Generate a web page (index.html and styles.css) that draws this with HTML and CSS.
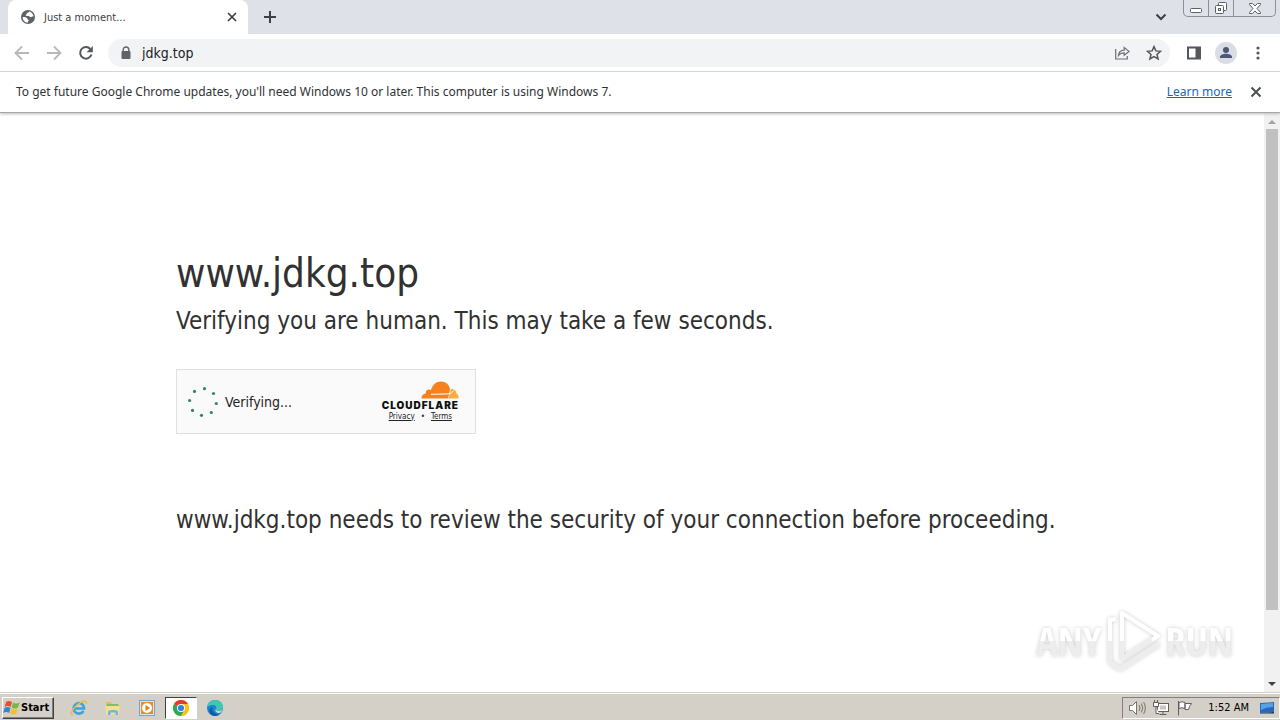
FILE: index.html
```html
<!DOCTYPE html>
<html lang="en">
<head>
    <meta charset="UTF-8">
    <meta name="viewport" content="width=device-width, initial-scale=1.0">
    <title>Just a moment...</title>
    <link rel="stylesheet" href="styles.css">
</head>
<body>
    <!-- Tab strip -->
    <header class="tab-strip">
        <div class="tab">
            <svg class="favicon" width="16" height="16" viewBox="0 0 16 16">
                <circle cx="8" cy="8" r="7" fill="#5f6368"/>
                <path d="M2.6 8.2c1.5-.3 3.4-.2 4.4.7.8.7.2 1.5 1.3 1.8.8.2.5 1.2-.3 1.6v1.3C4.900 13.400 2.600 11.200 2.600 8.200zM9 2.600c-.3 1-.9 1.300-1.700 1.500-.8.2-.3 1.200-1.200 1.500-.7.200-.4 1.200.4 1.300h2.200c1 0 1 1.300 1.800 1.300 1.300 0 1.200-1 3-1C13.200 4.900 11.500 3.100 9 2.600z" fill="#fff"/>
            </svg>
            <span class="tab-title">Just a moment...</span>
            <button class="icon-btn tab-close" aria-label="Close tab">
                <svg width="10" height="10" viewBox="0 0 10 10"><path d="M1 1l8 8M9 1L1 9" stroke="#3c4043" stroke-width="1.7"/></svg>
            </button>
        </div>
        <button class="icon-btn new-tab" aria-label="New tab">
            <svg width="12" height="12" viewBox="0 0 12 12"><path d="M6 0v12M0 6h12" stroke="#3c4043" stroke-width="2"/></svg>
        </button>
        <button class="icon-btn tab-search" aria-label="Search tabs">
            <svg width="12" height="8" viewBox="0 0 12 8"><path d="M1.500 1.500L6 6l4.500-4.500" fill="none" stroke="#3c4043" stroke-width="2"/></svg>
        </button>
        <div class="window-controls">
            <button aria-label="Minimize">
                <svg width="14" height="14" viewBox="0 0 14 14"><rect x="1.500" y="7.500" width="11" height="4" rx="1" fill="#fff" stroke="#5b5f66"/></svg>
            </button>
            <button aria-label="Restore">
                <svg width="14" height="14" viewBox="0 0 14 14" fill="#fff" stroke="#5b5f66"><rect x="4.500" y="1.500" width="8" height="8" rx="1"/><rect x="1.500" y="4.500" width="8" height="8" rx="1"/><rect x="4.500" y="7.500" width="2" height="2"/></svg>
            </button>
            <button class="close" aria-label="Close">
                <svg width="14" height="14" viewBox="0 0 14 14"><path d="M1.500 2.500h3L7 5l2.500-2.500h3v1L9 7.500l3.500 4v1h-3L7 10l-2.500 2.500h-3v-1L5 7.500l-3.500-4z" fill="#fff" stroke="#5b5f66"/></svg>
            </button>
        </div>
    </header>

    <!-- Toolbar -->
    <nav class="toolbar">
        <button class="icon-btn" aria-label="Back" disabled>
            <svg width="16" height="16" viewBox="0 0 16 16"><path d="M15 8H2M8 1.500L1.500 8 8 14.500" fill="none" stroke="#b6b8bb" stroke-width="1.800"/></svg>
        </button>
        <button class="icon-btn" aria-label="Forward" disabled>
            <svg width="16" height="16" viewBox="0 0 16 16"><path d="M1 8h13M8 1.500L14.500 8 8 14.500" fill="none" stroke="#b6b8bb" stroke-width="1.800"/></svg>
        </button>
        <button class="icon-btn" aria-label="Reload">
            <svg width="16" height="16" viewBox="0 0 16 16"><path d="M13.500 9.500A5.800 5.800 0 1 1 12.300 4" fill="none" stroke="#54575c" stroke-width="2"/><path d="M14.800 1v6.200H8.600z" fill="#54575c"/></svg>
        </button>
        <div class="omnibox">
            <svg width="12" height="14" viewBox="0 0 12 14"><path d="M3.200 6V3.800a2.800 2.800 0 0 1 5.600 0V6" fill="none" stroke="#5f6368" stroke-width="1.400"/><rect x="1.500" y="5" width="9" height="8" rx="1" fill="#5f6368"/></svg>
            <input type="text" value="jdkg.top" aria-label="Address">
            <button class="icon-btn" aria-label="Share">
                <svg width="16" height="16" viewBox="0 0 16 16" fill="none" stroke="#6c7075" stroke-width="1.200"><path d="M1.700 4v10h11.600v-3"/><path d="M4.500 10.500c.3-3.600 2-5.200 5.700-5.300V2.500L15 6.400l-4.800 3.800V7.800c-2.500 0-4.300.7-5.700 2.700z"/></svg>
            </button>
            <button class="icon-btn" aria-label="Bookmark">
                <svg width="16" height="16" viewBox="0 0 16 16"><path d="M8 1.600l1.900 4.300 4.600.4-3.500 3.100 1.100 4.600L8 11.600 3.900 14 5 9.400 1.500 6.300l4.600-.4z" fill="none" stroke="#54575c" stroke-width="1.500"/></svg>
            </button>
        </div>
        <button class="icon-btn" aria-label="Side panel">
            <svg width="16" height="16" viewBox="0 0 16 16"><rect x="2" y="2.500" width="12" height="11" fill="none" stroke="#54575c" stroke-width="2"/><path d="M9.500 2h5v12h-5z" fill="#54575c"/></svg>
        </button>
        <button class="icon-btn avatar" aria-label="Profile">
            <svg width="22" height="22" viewBox="0 0 22 22"><circle cx="11" cy="11" r="11" fill="#dadde3"/><circle cx="11" cy="8" r="3" fill="#4b5877"/><path d="M5 16v-1c0-2.200 3.500-3.300 6-3.300s6 1.100 6 3.300v1z" fill="#4b5877"/></svg>
        </button>
        <button class="icon-btn" aria-label="Menu">
            <svg width="16" height="16" viewBox="0 0 16 16" fill="#54575c"><circle cx="8" cy="3" r="1.600"/><circle cx="8" cy="8" r="1.600"/><circle cx="8" cy="13" r="1.600"/></svg>
        </button>
    </nav>

    <div class="infobar">
        <span class="infobar-text">To get future Google Chrome updates, you'll need Windows 10 or later. This computer is using Windows 7.</span>
        <a href="#">Learn more</a>
        <button class="icon-btn" aria-label="Dismiss">
            <svg width="12" height="12" viewBox="0 0 12 12"><path d="M1.500 1.500l9 9M10.500 1.500l-9 9" stroke="#4b4e52" stroke-width="1.900"/></svg>
        </button>
    </div>

    <!-- Page -->
    <div class="viewport">
        <main class="page">
            <div class="content">
                <h1>www.jdkg.top</h1>
                <h2>Verifying you are human. This may take a few seconds.</h2>
                <div class="challenge">
                    <svg class="spinner" width="32" height="32" viewBox="0 0 32 32" fill="#2f8a5b">
                        <circle cx="17.500" cy="2.700" r="1.600"/><circle cx="26.500" cy="7.500" r="1.600"/><circle cx="29.300" cy="17.500" r="1.600"/><circle cx="24.300" cy="26.500" r="1.600"/><circle cx="14.500" cy="29.300" r="1.600"/><circle cx="5.500" cy="24.400" r="1.600"/><circle cx="2.600" cy="14.500" r="1.600"/><circle cx="7.500" cy="5.400" r="1.600"/>
                    </svg>
                    <span class="challenge-text">Verifying...</span>
                    <div class="brand">
                        <svg class="cloud" width="38" height="18" viewBox="0 0 38 18">
                            <path d="M27.500 17.500l1-4c.4-2.300.7-4.200 1.500-5.600 3.500-.2 5.500 2 5.500 4.700 1.800.8 2.200 2.600 2 4.900z" fill="#fbad41"/>
                            <path d="M.5 17.500c-.1-2.800 1.600-4.600 4.300-4.900-.4-3.300 2.400-5 5.200-3.500C11.500 3.600 15.200.5 20 .5c4.800 0 8.200 3 9 7.600-.4 3.100-1 6.300-2 9.400z" fill="#f6821f"/>
                            <path d="M10 13.300l17-.4c3-.2 4.500-1.700 5.500-3.400" fill="none" stroke="#fff"/>
                        </svg>
                        <span class="brand-name">CLOUDFLARE</span>
                        <div class="brand-links"><a href="#">Privacy</a><span>•</span><a href="#">Terms</a></div>
                    </div>
                </div>
                <p>www.jdkg.top needs to review the security of your connection before proceeding.</p>
            </div>
        </main>
        <div class="scrollbar">
            <svg width="16" height="16" viewBox="0 0 16 16"><path d="M4 11l4-4 4 4z" fill="#a3a3a3"/></svg>
            <div class="thumb"></div>
            <svg width="16" height="16" viewBox="0 0 16 16"><path d="M4 6l4 4 4-4z" fill="#404040"/></svg>
        </div>
        <div class="watermark">
            <span>ANY</span>
            <svg width="60" height="66" viewBox="0 0 60 66" fill="none" stroke-linejoin="round">
                <path d="M19 5v46l36-23zM13 11l-6 1v42l10 7 39-25" stroke="#fff" stroke-width="4"/>
                <path d="M19 33v18l30-19M7 33v21l10 7 39-25" stroke="#ededed" stroke-width="4"/>
            </svg>
            <span>RUN</span>
        </div>
    </div>

    <!-- Windows taskbar -->
    <footer class="taskbar">
        <button class="start">
            <svg width="18" height="16" viewBox="0 0 18 16"><path d="M3 2c2-1.300 4-1.300 6 0L7.700 7c-2-1.200-4-1.200-6 0z" fill="#e8502a"/><path d="M10 2.500c2 1.200 4 1.200 6.500 0L15 7.500c-2 1.200-4.200 1.200-6.300 0z" fill="#77b843"/><path d="M1.500 8c2-1.200 4-1.200 6 0L6.200 13c-2-1.200-4-1.200-6 0z" fill="#3584d4"/><path d="M8.500 8.500c2 1.200 4 1.200 6.300 0l-1.400 5c-2 1.200-4.200 1.200-6.300 0z" fill="#f7bd2c"/></svg>
            <span>Start</span>
        </button>
        <div class="quick-launch">
            <button aria-label="Internet Explorer">
                <svg width="18" height="18" viewBox="0 0 18 18" fill="none"><path d="M4 9.500h10.200A5.300 5.300 0 1 0 13.500 12" stroke="#3ba4dd" stroke-width="2.600"/><path d="M3 15.500C-.5 17 1 11.500 6.500 6.500S17.500.5 16.300 5" stroke="#e9bd3c" stroke-width="1.400"/></svg>
            </button>
            <button aria-label="Explorer">
                <svg width="18" height="18" viewBox="0 0 18 18"><path d="M2 3h5l1 2h7v10H2z" fill="#e5bd55"/><path d="M3 5h11v4H3z" fill="#7fbf6b"/><path d="M1.500 7h14l-.5 8.500H2z" fill="#f6df91"/><path d="M4 16v-3.500c0-2 10-2 10 0V16h-2.500v-2.500h-5V16z" fill="#6fb7df"/></svg>
            </button>
            <button aria-label="Media Player">
                <svg width="18" height="18" viewBox="0 0 18 18"><rect x="1.500" y="1.500" width="15" height="15" fill="#d6e9f6" stroke="#6ba7cf"/><rect x="3" y="3" width="12" height="12" fill="#ef8a1d"/><circle cx="9" cy="9" r="5" fill="#fff"/><path d="M7.500 6l4.500 3-4.500 3z" fill="#e87811"/></svg>
            </button>
            <button class="active" aria-label="Chrome">
                <svg width="18" height="18" viewBox="0 0 18 18"><circle cx="9" cy="9" r="8" fill="#fbc116"/><path d="M9 9L2.070 5A8 8 0 0 1 15.930 5z" fill="#e33b2e"/><path d="M9 9L2.070 5A8 8 0 0 0 9 17l3.500-6z" fill="#2da94f"/><path d="M9 5h6.930A8 8 0 0 1 9 17l3.500-6z" fill="#fbc116"/><circle cx="9" cy="9" r="4" fill="#fff"/><circle cx="9" cy="9" r="3.100" fill="#3b7ded"/></svg>
            </button>
            <button aria-label="Edge">
                <svg width="18" height="18" viewBox="0 0 18 18"><circle cx="9" cy="9" r="8" fill="#1685cf"/><path d="M1.200 8.500C1.800 4 5 1 9 1c5 0 8 3.500 8 7 0 3-2.500 4-4.500 4-2.300 0-3-1-2.200-2.200C11 7.500 8.800 6 6.500 6c-2.300 0-4.300 1-5.300 2.500z" fill="#3fc7b0"/><path d="M6.500 8C5 11.500 8 15.500 13.500 15.600 10 18 4.500 17 3.500 13 3 10.500 4.500 8.500 6.500 8z" fill="#1558a8"/><path d="M10.300 9.800c-.8 1.200 0 2.200 2.200 2.200 1.800 0 3.200-.6 4-1.500-.4 1.500-1.300 2.700-2.500 3.500-3.500.8-6-2.500-3.700-4.200z" fill="#d4d0c8"/></svg>
            </button>
        </div>
        <div class="tray">
            <svg width="18" height="16" viewBox="0 0 18 16" fill="#fff" stroke="#77756f"><path d="M1.500 5.500h3l4-4v13l-4-4h-3z"/><path d="M11 5q2 3 0 6M13.300 3.500q3 4.500 0 9M15.600 2q3.500 6 0 12" fill="none"/></svg>
            <svg width="18" height="16" viewBox="0 0 18 16" fill="#fff" stroke="#625f5a"><rect x="5.500" y="3.500" width="11" height="8"/><path d="M7.500 14.500h7M11 11.500v3M1.500 2.500h5v4h-5zM2.500 0v2.500M5.500 0v2.500M4 6.500v7h3"/><path d="M8 5.500h6v4H8z" fill="#c9c6be" stroke="none"/></svg>
            <svg width="18" height="16" viewBox="0 0 18 16" fill="#fff" stroke="#625f5a"><path d="M2.500 1v14.500"/><path d="M3 2.500q3-1.500 6 0v6q-3-1.500-6 0zM9 3.500h6.500l-2 3-1 3H9z"/></svg>
            <time>1:52 AM</time>
            <svg width="16" height="16" viewBox="0 0 16 16"><path d="M1 3l14-1v10L1 13z" fill="#2468c0"/><path d="M2 4l12-1v4Q8 7 2 10z" fill="#5ba2e5"/><path d="M1 13l14-1v1.500H1z" fill="#1d3154"/></svg>
        </div>
    </footer>
</body>
</html>
```
FILE: styles.css
```css
:root {
    --ui-font: Tahoma, "DejaVu Sans Condensed", "Noto Sans", sans-serif;
    --strip: #dee1e8;
    --taskbar: #d4d0c8;
}

* {
    box-sizing: border-box;
}

body {
    margin: 0;
    min-height: 100vh;
    display: flex;
    flex-direction: column;
    background: #fff;
    color: #313131;
    font-family: var(--ui-font);
    font-size: 12px;
}

svg {
    display: block;
    flex: none;
}

button {
    font-family: inherit;
    padding: 0;
}

.icon-btn {
    display: flex;
    align-items: center;
    justify-content: center;
    width: 16px;
    height: 16px;
    border: 0;
    background: none;
    flex: none;
}

/* tab strip */
.tab-strip {
    display: flex;
    height: 34px;
    padding-left: 8px;
    background: var(--strip);
}

.tab {
    display: flex;
    align-items: center;
    width: 240px;
    padding: 0 8px 0 12px;
    background: #fff;
    border-radius: 8px 8px 0 0;
}

.tab-title {
    flex: 1;
    margin-left: 8px;
    font-size: 11px;
    color: #3c4043;
}

.new-tab {
    margin: 9px 0 0 14px;
}

.tab-search {
    margin: 9px 14px 0 auto;
}

.window-controls {
    display: flex;
    height: 17px;
    margin-right: 4px;
    border: 1px solid #8b8f97;
    border-top: 0;
    border-radius: 0 0 5px 5px;
}

.window-controls button {
    display: flex;
    align-items: center;
    justify-content: center;
    width: 25px;
    border: 0;
    border-right: 1px solid #8b8f97;
    background: none;
}

.window-controls .close {
    width: 41px;
    border-right: 0;
}

/* toolbar */
.toolbar {
    display: flex;
    align-items: center;
    gap: 16px;
    height: 38px;
    padding: 0 14px;
    border-bottom: 1px solid #d9dbde;
}

.omnibox {
    flex: 1;
    display: flex;
    align-items: center;
    height: 28px;
    margin-left: -2px;
    padding: 0 8px 0 12px;
    gap: 16px;
    border-radius: 14px;
    background: #f1f3f4;
}

.omnibox input {
    flex: 1;
    min-width: 0;
    margin-left: -6px;
    padding: 0;
    border: 0;
    background: none;
    color: #202124;
    font-family: inherit;
    font-size: 14px;
}

.toolbar .avatar {
    width: 22px;
    height: 22px;
    margin: 0 -3px;
}

/* infobar */
.infobar {
    display: flex;
    align-items: center;
    height: 41px;
    padding: 0 16px;
    border-bottom: 1px solid #a6a6a6;
    box-shadow: 0 1px 3px #bbb;
    color: #303134;
    font-family: Tahoma, "Noto Sans", sans-serif;
    line-height: 14px;
    z-index: 1;
}

.infobar-text {
    flex: 1;
}

.infobar a {
    margin-right: 16px;
    color: #1967b8;
}

/* page */
.viewport {
    position: relative;
    flex: 1;
    display: flex;
}

.page {
    flex: 1;
}

.content {
    max-width: 960px;
    margin: 0 auto;
    padding: 130px 24px 0;
}

h1 {
    margin: 0;
    font-size: 40px;
    font-weight: 400;
    line-height: 60px;
}

h2,
p {
    margin: 0;
    font-size: 24px;
    font-weight: 400;
    line-height: 36px;
}

.challenge {
    display: flex;
    align-items: center;
    width: 300px;
    height: 65px;
    margin: 30px 0 68px;
    padding: 0 16px 0 10px;
    border: 1px solid #e0e0e0;
    background: #fafafa;
}

.challenge-text {
    flex: 1;
    margin-left: 6px;
    font-size: 14px;
    color: #222;
}

.brand {
    display: flex;
    flex-direction: column;
    align-items: center;
}

.cloud {
    align-self: flex-end;
}

.brand-name {
    font: 900 10px/12px Inter, sans-serif;
    letter-spacing: 1px;
    color: #111;
}

.brand-links {
    display: flex;
    gap: 6px;
    font-size: 8px;
    line-height: 12px;
}

.brand-links a {
    color: #222;
}

.scrollbar {
    display: flex;
    flex-direction: column;
    width: 16px;
    background: #f1f1f1;
}

.thumb {
    width: 12px;
    height: 83%;
    margin: 0 2px auto;
    background: #c1c1c1;
}

.watermark {
    position: absolute;
    right: 47px;
    bottom: 18px;
    display: flex;
    align-items: center;
    gap: 2px;
    font: 300 40px/66px "Open Sans Condensed", Roboto, sans-serif;
    filter: drop-shadow(0 0 2px #ccc);
}

.watermark span {
    background: linear-gradient(#fff 50%, #ededed 50%);
    background-clip: text;
    -webkit-background-clip: text;
    color: transparent;
}

/* taskbar */
.taskbar {
    display: flex;
    align-items: center;
    height: 28px;
    padding: 2px 0 0 2px;
    border-top: 1px solid #d4d0c8;
    background: var(--taskbar);
    color: #000;
    box-shadow: inset 0 1px #fff;
}

.start {
    display: flex;
    align-items: center;
    width: 52px;
    height: 22px;
    border: 1px solid;
    border-color: #fff #404040 #404040 #fff;
    box-shadow: inset -1px -1px #808080;
    background: var(--taskbar);
    font-size: 11px;
    font-weight: 700;
}

.quick-launch {
    display: flex;
    gap: 2px;
    margin-left: 9px;
}

.quick-launch button {
    display: flex;
    align-items: center;
    justify-content: center;
    width: 32px;
    height: 22px;
    border: 1px solid transparent;
    background: none;
}

.quick-launch .active {
    border-color: #404040 #fff #fff #404040;
    background: #fff;
}

.tray {
    display: flex;
    align-items: center;
    gap: 6px;
    height: 22px;
    margin-left: auto;
    padding: 0 4px 0 5px;
    border: 1px solid;
    border-color: #808080 #fff #fff #808080;
    font-size: 11px;
}

.tray time {
    margin: 0 4px 0 8px;
}
```
